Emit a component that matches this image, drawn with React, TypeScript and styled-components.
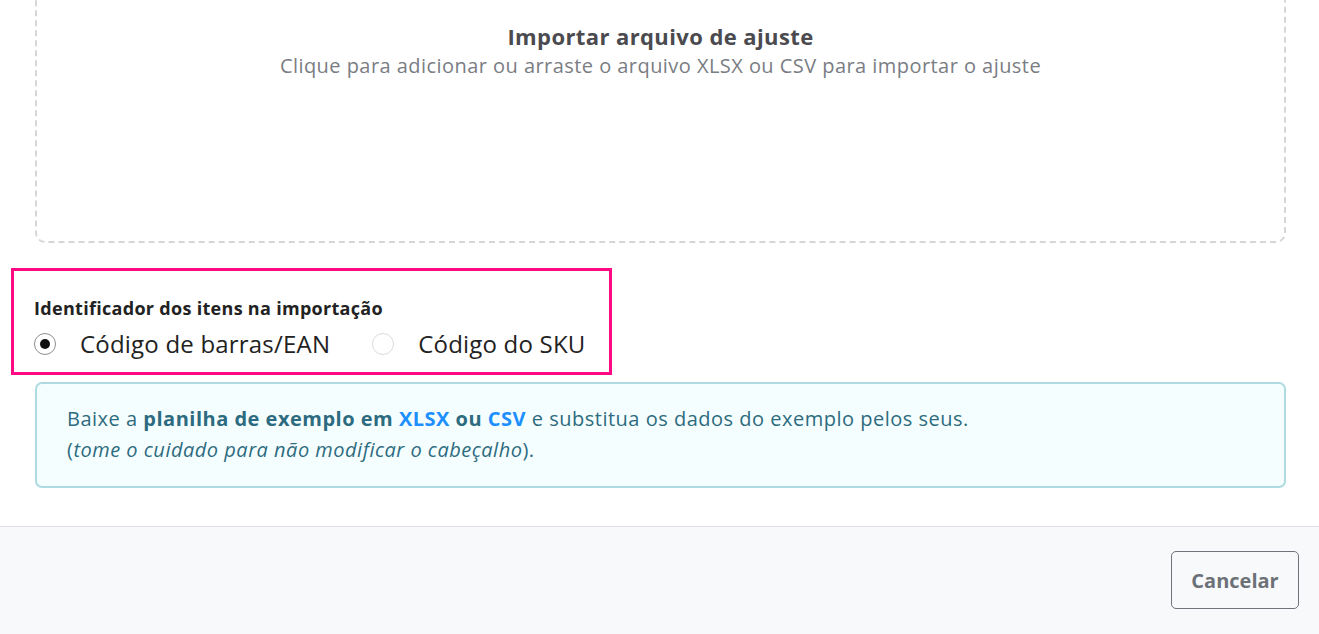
import React from "react";
import styled, { createGlobalStyle } from "styled-components";

const Global = createGlobalStyle`
  html, body { margin: 0; padding: 0; background: #fff; }
  body { font-family: "Open Sans", "Noto Sans", sans-serif; overflow: hidden; }
  * { box-sizing: border-box; }
`;

const Modal = styled.div`
  width: 1319px;
  height: 634px;
  display: flex;
  flex-direction: column;
  overflow: hidden;
`;

const Body = styled.div`
  padding: 0 33px 38px 35px;
  display: flex;
  flex-direction: column;
`;

const DropZone = styled.div`
  margin-top: -20px;
  height: 263px;
  border: 2px dashed #d6d6d6;
  border-radius: 10px;
  display: flex;
  flex-direction: column;
  align-items: center;
  padding-top: 39px;
  cursor: pointer;
`;

const DropTitle = styled.div`
  font-size: 22px;
  font-weight: 700;
  letter-spacing: 0.4px;
  color: #4a4a4f;
  line-height: 30px;
`;

const DropHint = styled.div`
  font-size: 20px;
  letter-spacing: 0.45px;
  color: #7a7d83;
  line-height: 30px;
`;

const Highlight = styled.fieldset`
  margin: 25px 0 0 -24px;
  width: 601px;
  height: 107px;
  border: 3px solid #ff0a85;
  padding: 25px 0 0 20px;
  display: flex;
  flex-direction: column;
  gap: 9px;
`;

const GroupLabel = styled.div`
  font-size: 18px;
  font-weight: 700;
  letter-spacing: 0.3px;
  color: #222;
  line-height: 24px;
`;

const RadioRow = styled.div`
  display: flex;
  align-items: center;
  gap: 42px;
`;

const RadioOption = styled.label`
  display: flex;
  align-items: center;
  gap: 24px;
  font-size: 24px;
  letter-spacing: 0.2px;
  color: #222;
  line-height: 29px;
  cursor: pointer;
`;

const RadioCircle = styled.span<{ $checked: boolean }>`
  width: 22px;
  height: 22px;
  border-radius: 50%;
  border: 1px solid ${(p) => (p.$checked ? "#8f8f8f" : "#dcdcdc")};
  background: #fff;
  display: flex;
  align-items: center;
  justify-content: center;
  flex: none;
  &::after {
    content: "";
    width: 10px;
    height: 10px;
    border-radius: 50%;
    background: ${(p) => (p.$checked ? "#111" : "transparent")};
  }
`;

const InfoBox = styled.div`
  margin-top: 7px;
  background: #f5fefe;
  border: 2px solid #aedbe2;
  border-radius: 7px;
  padding: 19px 30px 21px 30px;
  color: #2d6b80;
  font-size: 20px;
  letter-spacing: 0.5px;
  line-height: 31px;
`;

const Strong = styled.b`
  font-weight: 700;
`;

const Link = styled.a`
  color: #1e8fff;
  font-weight: 700;
  text-decoration: none;
`;

const Footer = styled.div`
  flex: 1;
  border-top: 1px solid #dcdfe3;
  background: #f8f9fa;
  display: flex;
  justify-content: flex-end;
  align-items: flex-start;
  padding: 24px 20px 0 0;
`;

const Button = styled.button`
  width: 128px;
  height: 58px;
  border: 1px solid #6e737a;
  border-radius: 5px;
  background: transparent;
  color: #6c7178;
  font-family: inherit;
  font-size: 20px;
  font-weight: 700;
  cursor: pointer;
`;

export default function App() {
  return (
    <Modal>
      <Global />
      <Body>
        <DropZone>
          <DropTitle>Importar arquivo de ajuste</DropTitle>
          <DropHint>
            Clique para adicionar ou arraste o arquivo XLSX ou CSV para importar o ajuste
          </DropHint>
        </DropZone>
        <Highlight>
          <GroupLabel>Identificador dos itens na importação</GroupLabel>
          <RadioRow>
            <RadioOption>
              <RadioCircle $checked />
              Código de barras/EAN
            </RadioOption>
            <RadioOption>
              <RadioCircle $checked={false} />
              Código do SKU
            </RadioOption>
          </RadioRow>
        </Highlight>
        <InfoBox>
          Baixe a <Strong>planilha de exemplo em</Strong> <Link href="#">XLSX</Link>{" "}
          <Strong>ou</Strong> <Link href="#">CSV</Link> e substitua os dados do exemplo pelos
          seus.
          <br />(<i>tome o cuidado para não modificar o cabeçalho</i>).
        </InfoBox>
      </Body>
      <Footer>
        <Button>Cancelar</Button>
      </Footer>
    </Modal>
  );
}
